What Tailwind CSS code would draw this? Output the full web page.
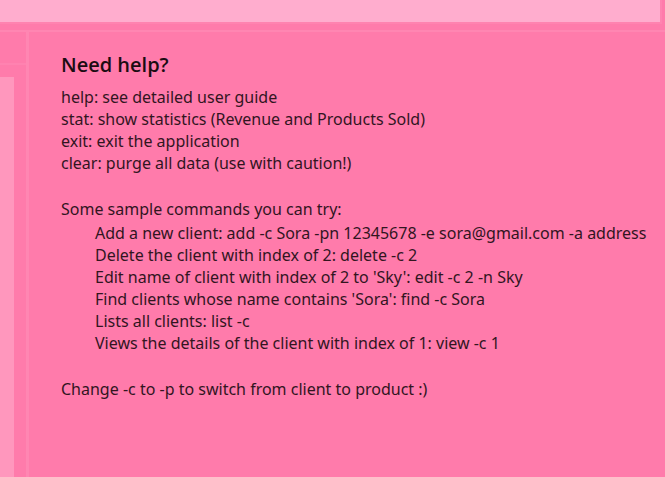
<!DOCTYPE html>
<html lang="en">
<head>
<meta charset="utf-8">
<title>Help</title>
<script src="https://cdn.jsdelivr.net/npm/@tailwindcss/browser@4"></script>
</head>
<body class="flex min-h-screen flex-col overflow-hidden bg-[#ff7bab] font-['Noto_Sans','Open_Sans',sans-serif] text-base leading-[22px] text-[#32151f]">
  <header class="border-b-2 border-[#ff86b2] pr-[3px] pb-1.5">
    <div class="border-r-2 border-b-2 border-[#ff83b0]">
      <input type="text" aria-label="Command" class="block h-[22px] w-full bg-[#ffadce] px-2 outline-none">
    </div>
  </header>
  <div class="flex grow">
    <aside class="flex w-[29px] shrink-0 flex-col border-r-3 border-[#ff86b2]">
      <div class="h-[31px]"></div>
      <div class="flex grow border-t-2 border-[#ff82b0] pt-3">
        <div class="w-3.5 bg-[#ff97bd]"></div>
      </div>
    </aside>
    <main class="grow pt-5 pl-8 whitespace-nowrap">
      <h1 class="mb-2 font-['Open_Sans',sans-serif] text-xl leading-[26px] font-semibold text-[#1c0c12]">Need help?</h1>
      <ul class="mb-6">
        <li>help: see detailed user guide</li>
        <li>stat: show statistics (Revenue and Products Sold)</li>
        <li>exit: exit the application</li>
        <li>clear: purge all data (use with caution!)</li>
      </ul>
      <p class="mb-0.5">Some sample commands you can try:</p>
      <ul class="mb-6 pl-[34px]">
        <li>Add a new client: add -c Sora -pn 12345678 -e sora@gmail.com -a address</li>
        <li>Delete the client with index of 2: delete -c 2</li>
        <li>Edit name of client with index of 2 to 'Sky': edit -c 2 -n Sky</li>
        <li>Find clients whose name contains 'Sora': find -c Sora</li>
        <li>Lists all clients: list -c</li>
        <li>Views the details of the client with index of 1: view -c 1</li>
      </ul>
      <p>Change -c to -p to switch from client to product :)</p>
    </main>
  </div>
</body>
</html>
